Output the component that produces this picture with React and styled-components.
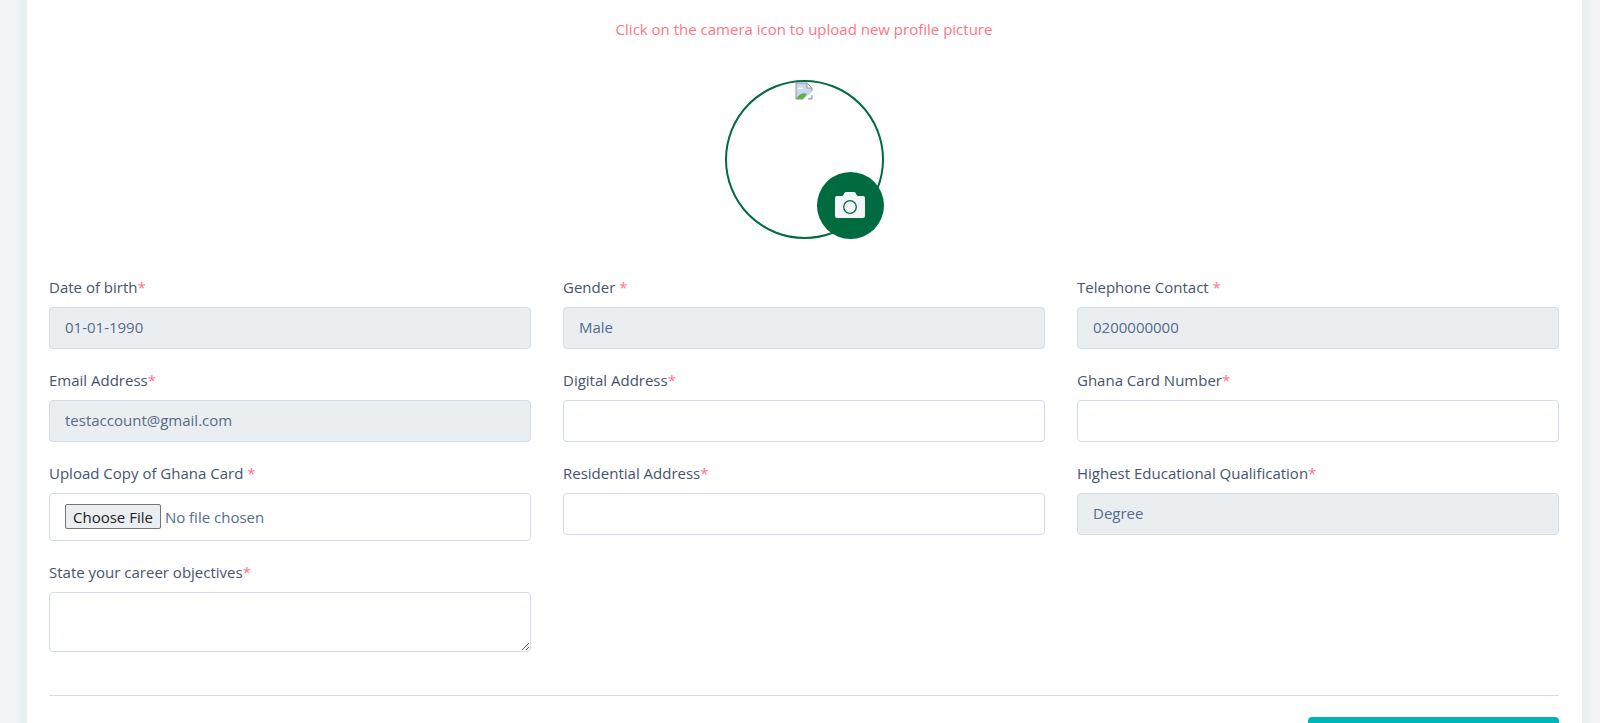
import React from "react";
import styled, { createGlobalStyle } from "styled-components";

const GlobalStyle = createGlobalStyle`
  *, *::before, *::after { box-sizing: border-box; }
  body {
    margin: 0;
    background: #f3f4f8;
    color: #475f7b;
    font-family: "Open Sans", "Liberation Sans", sans-serif;
    font-size: 15px;
    line-height: 24px;
  }
`;

const Page = styled.main`
  padding: 0 18px 0 27px;
`;

const Card = styled.form`
  padding: 17px 23px 24px 22px;
  background: #fff;
  box-shadow: 0 0 5px 8px #e9eef1;
`;

const Hint = styled.p`
  margin: 0 0 39px;
  text-align: center;
  color: #ff7588;
`;

const Avatar = styled.div`
  position: relative;
  display: flex;
  justify-content: center;
  width: 159px;
  height: 159px;
  margin: 0 auto 36px;
  border: 2px solid #006b3f;
  border-radius: 50%;
`;

const UploadButton = styled.button`
  position: absolute;
  right: -2px;
  bottom: -2px;
  display: grid;
  place-items: center;
  width: 67px;
  height: 67px;
  padding: 0 0 2px;
  border: 0;
  border-radius: 50%;
  background: #006b3f;
  cursor: pointer;
`;

const Fields = styled.div`
  display: grid;
  grid-template-columns: repeat(3, minmax(0, 1fr));
  gap: 19px 32px;
  align-items: start;
`;

const Field = styled.div`
  display: flex;
  flex-direction: column;
  gap: 8px;
`;

const Label = styled.label`
  color: #44546f;
`;

const Required = styled.span`
  color: #ff7588;
`;

const Control = styled.input`
  width: 100%;
  height: ${(p) => (p.type === "file" ? 48 : 42)}px;
  padding: ${(p) => (p.type === "file" ? "10px 15px" : "7px 15px 9px")};
  border: 1px solid #d3dce9;
  border-radius: 4px;
  background: #fff;
  color: #566b8c;
  font: inherit;
  outline: none;

  &:read-only:not([type="file"]) {
    background: #eaeef1;
  }

  &::file-selector-button {
    height: 25px;
    margin: 0 4px 0 0;
    padding: 0 7px;
    border: 1px solid #767676;
    border-radius: 2px;
    background: #eaeef1;
    color: #222;
    font: inherit;
    line-height: 22px;
  }
`;

const TextArea = styled.textarea`
  width: 100%;
  height: 60px;
  padding: 8px 15px;
  border: 1px solid #d3dce9;
  border-radius: 4px;
  background: #fff;
  color: #566b8c;
  font: inherit;
  resize: vertical;
  outline: none;
`;

const Footer = styled.footer`
  display: flex;
  justify-content: flex-end;
  margin-top: 43px;
  padding-top: 21px;
  border-top: 1px solid #d3dce9;
`;

const SubmitButton = styled.button`
  width: 251px;
  height: 44px;
  border: 0;
  border-radius: 4px;
  background: #00b5b8;
  cursor: pointer;
`;

const fields = [
  { id: "dob", label: "Date of birth", value: "01-01-1990" },
  { id: "gender", label: "Gender ", value: "Male" },
  { id: "phone", label: "Telephone Contact ", value: "0200000000" },
  { id: "email", label: "Email Address", value: "testaccount@gmail.com" },
  { id: "digital", label: "Digital Address" },
  { id: "card", label: "Ghana Card Number" },
  { id: "cardfile", label: "Upload Copy of Ghana Card ", type: "file" },
  { id: "residence", label: "Residential Address" },
  { id: "education", label: "Highest Educational Qualification", value: "Degree" },
  { id: "objectives", label: "State your career objectives", multiline: true },
];

function MissingImage() {
  return (
    <svg width="18" height="18" viewBox="0 0 18 18" aria-hidden="true">
      <path d="M1 1H12L17 6V17H1Z" fill="#c8d8e8" />
      <path d="M3 7c0-2 2-2 2.500-1 1-1.500 3-.5 2.500 1Z" fill="#fff" />
      <path d="M1 17C4 12 8 10 12 12L8 17Z" fill="#5db044" />
      <path d="M8 17.500 17.500 9.500V13L12.500 17.500Z" fill="#fff" />
      <path d="M12 1V6H17Z" fill="#fff" />
      <path
        d="M17 9V6L12 1H1V17H8M12 1V6H17M13 17H17V13"
        fill="none"
        stroke="#9097a0"
      />
    </svg>
  );
}

function CameraIcon() {
  return (
    <svg width="32" height="28" viewBox="0 0 32 28" aria-hidden="true">
      <path
        d="M3 5H8Q9 5 9.400 4L10 2.500Q10.600 1 12 1H20Q21.400 1 22 2.500L22.600 4Q23 5 24 5H29Q31 5 31 7V25Q31 27 29 27H3Q1 27 1 25V7Q1 5 3 5Z"
        fill="#f3f4f8"
      />
      <circle cx="16" cy="16" r="6.300" fill="none" stroke="#006b3f" strokeWidth="1.300" />
    </svg>
  );
}

export default function App() {
  return (
    <>
      <GlobalStyle />
      <Page>
        <Card onSubmit={(e) => e.preventDefault()}>
          <Hint>Click on the camera icon to upload new profile picture</Hint>
          <Avatar>
            <MissingImage />
            <UploadButton type="button" aria-label="Upload profile picture">
              <CameraIcon />
            </UploadButton>
          </Avatar>
          <Fields>
            {fields.map(({ id, label, value, type = "text", multiline }) => (
              <Field key={id}>
                <Label htmlFor={id}>
                  {label}
                  <Required>*</Required>
                </Label>
                {multiline ? (
                  <TextArea id={id} />
                ) : (
                  <Control
                    id={id}
                    type={type}
                    defaultValue={value}
                    readOnly={Boolean(value)}
                  />
                )}
              </Field>
            ))}
          </Fields>
          <Footer>
            <SubmitButton type="submit" aria-label="Save profile" />
          </Footer>
        </Card>
      </Page>
    </>
  );
}
